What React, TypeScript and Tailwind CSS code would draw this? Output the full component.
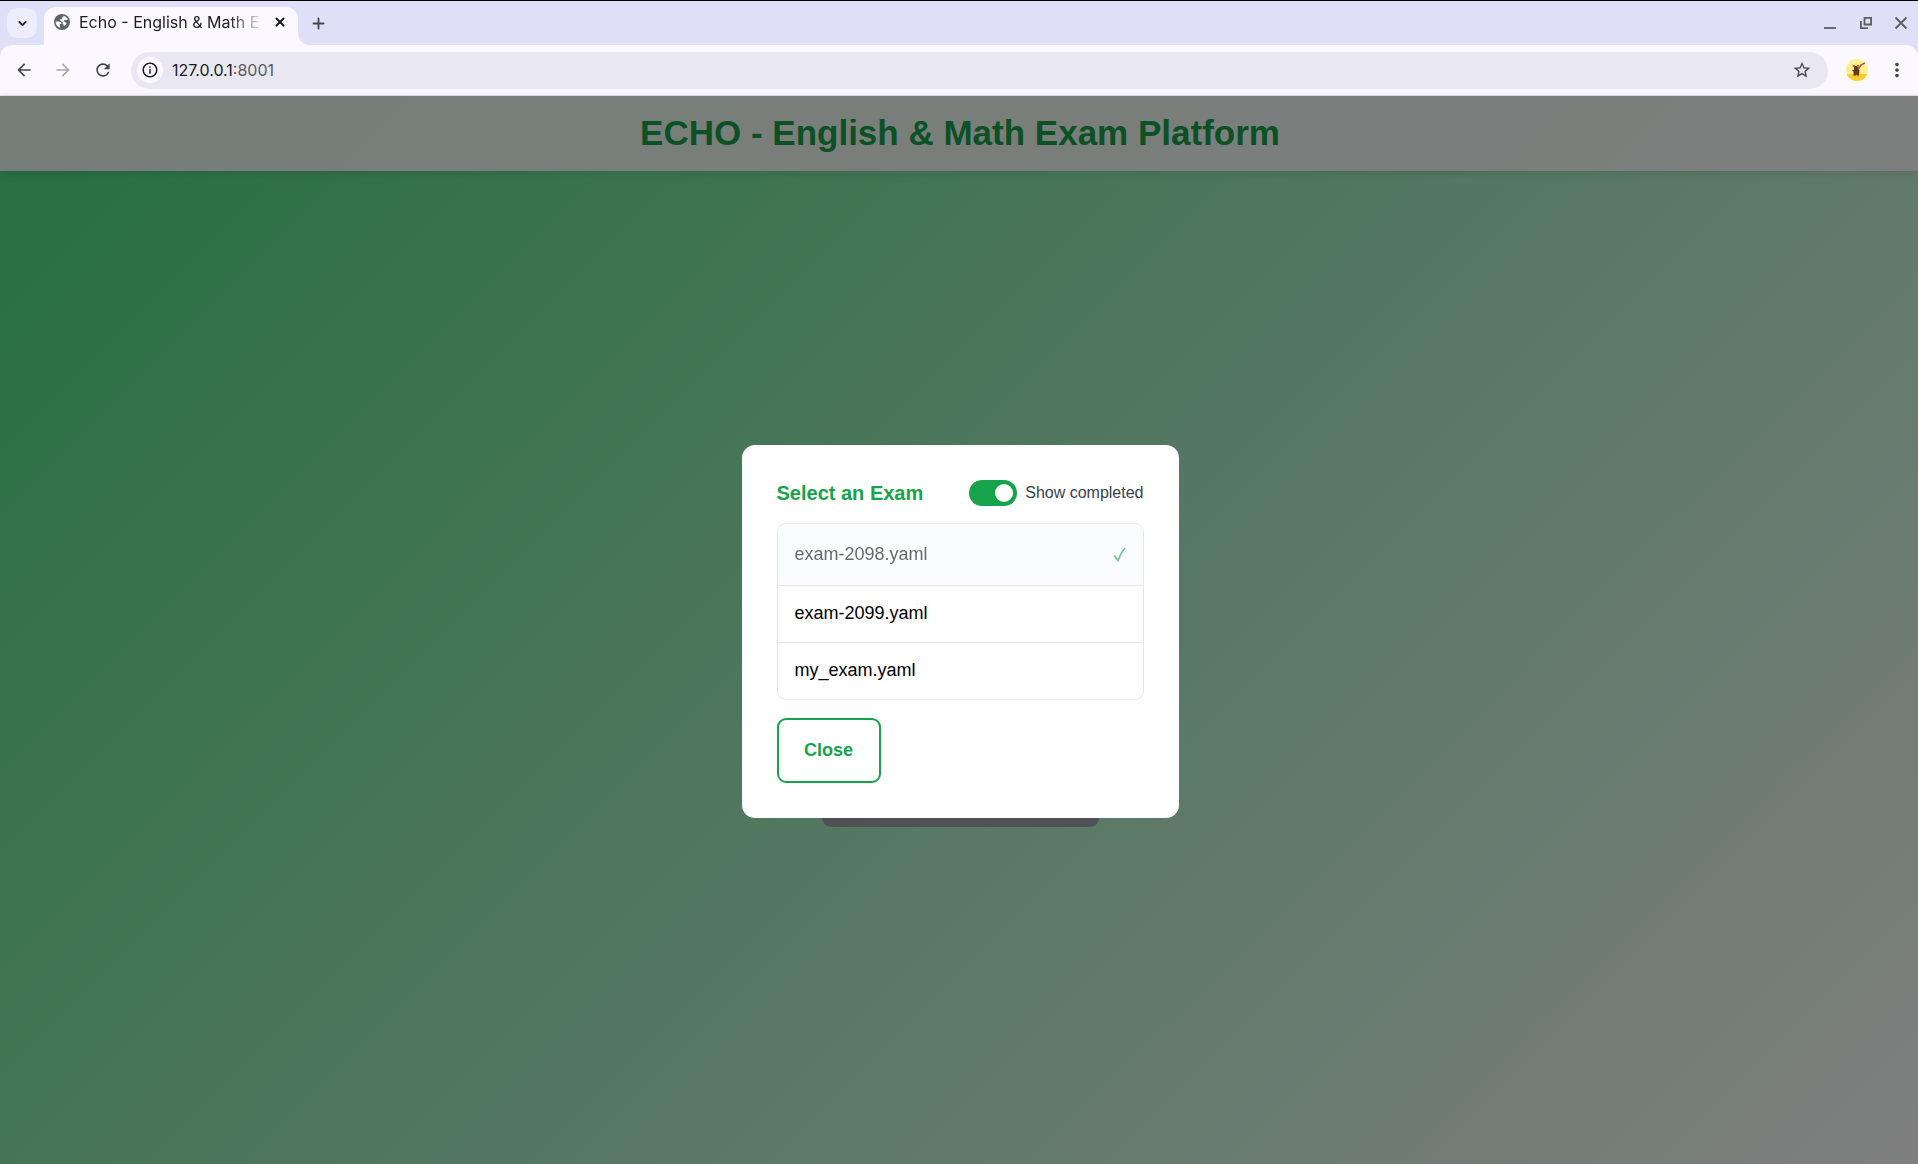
import { Plus, X, ChevronDown } from "lucide-react";
import { MdArrowBack, MdArrowForward, MdRefresh, MdInfoOutline, MdStarBorder, MdMoreVert } from "react-icons/md";

function GlobeIcon() {
  return (
    <svg width="16" height="16" viewBox="0 0 16 16" className="shrink-0" aria-hidden="true">
      <circle cx="8" cy="8" r="8" fill="#5f6368" />
      <path d="M1.500 7.500H4.500C6 7.500 7.500 8.500 7.500 10H5.800V11.500L6.300 13.800C3.500 13 1.500 10.700 1.500 7.500Z" fill="#fbf8ff" />
      <path d="M9.300 1.700C11.500 2.100 13.200 3.500 14 5.400L12.300 6H10.500L9.800 7.300L11.300 8L12.500 9.300L11.800 11L9.800 12L9.500 10.500L8.600 9.600V8.300L6.500 7L6 5.500L7.800 4.800L8 3.500L9.300 3Z" fill="#fbf8ff" />
    </svg>
  );
}

function TabStrip() {
  return (
    <div className="flex h-[45px] items-end border-t border-black bg-[#dfdff7]">
      <div className="flex h-[44px] w-[44px] items-center justify-center">
        <button aria-label="Search tabs" className="flex size-[30px] items-center justify-center rounded-[10px] bg-[#eeedfd] text-[#1b1b22]">
          <ChevronDown size={13} strokeWidth={3.4} />
        </button>
      </div>
      <div className="flex h-[38px] w-[254px] items-center rounded-t-xl bg-[#fbf8ff] pr-3 pb-2 pl-[10px]">
        <GlobeIcon />
        <span className="ml-[9px] w-[186px] shrink-0 bg-linear-to-r from-[#1b1b22] from-80% to-transparent bg-clip-text text-base whitespace-nowrap text-transparent">
          Echo - English &amp; Math E
        </span>
        <button aria-label="Close tab" className="ml-2 text-[#1b1b22]">
          <X size={14} strokeWidth={3.4} />
        </button>
      </div>
      <svg className="size-3 shrink-0" viewBox="0 0 12 12" aria-hidden="true"><path d="M0 0A12 12 0 0 0 12 12H0Z" fill="#fbf8ff" /></svg>
      <button aria-label="New tab" className="flex h-[44px] items-center text-[#45464f]">
        <Plus size={17} strokeWidth={2.6} />
      </button>
      <div className="ml-auto flex h-[44px] items-center gap-[21px] pr-[10px] text-[#5d5d64]">
        <button aria-label="Minimize">
          <svg width="16" height="16" viewBox="0 0 16 16"><path d="M2 13H14" stroke="currentColor" strokeWidth="1.800" /></svg>
        </button>
        <button aria-label="Restore">
          <svg width="14" height="14" viewBox="0 0 14 14" fill="none" stroke="currentColor" strokeWidth="1.800"><path d="M5.500 1.900H12.100V8.500H5.500ZM1.900 5V12.100H9" /></svg>
        </button>
        <button aria-label="Close window">
          <svg width="14" height="14" viewBox="0 0 14 14"><path d="M1.500 1.500L12.500 12.500M12.500 1.500L1.500 12.500" stroke="currentColor" strokeWidth="1.800" /></svg>
        </button>
      </div>
    </div>
  );
}

function Toolbar() {
  return (
    <div className="bg-[#dfdff7]">
      <div className="flex h-[51px] items-center rounded-t-xl border-b border-[#dfe0e8] bg-[#fbf8ff] pr-[10px] pl-3 text-[#45464f]">
        <button aria-label="Back" className="flex size-6 items-center justify-center"><MdArrowBack size={20} /></button>
        <button aria-label="Forward" className="ml-[15px] flex size-6 items-center justify-center text-[#a9a8b0]"><MdArrowForward size={20} /></button>
        <button aria-label="Reload" className="ml-4 flex size-6 items-center justify-center"><MdRefresh size={20} /></button>
        <div className="ml-4 flex h-[37px] flex-1 items-center rounded-full bg-[#e9e7f2] pr-4 pl-[6px]">
          <button aria-label="Site information" className="flex size-[26px] items-center justify-center rounded-full bg-[#fbf8ff] text-[#1b1b22]"><MdInfoOutline size={18} /></button>
          <a href="#" className="ml-[9px] flex-1 text-base text-[#1b1b22]">127.0.0.1<span className="text-[#5a5963]">:8001</span></a>
          <button aria-label="Bookmark this tab"><MdStarBorder size={20} /></button>
        </div>
        <button aria-label="Profile" className="ml-[18px]">
          <svg width="22" height="22" viewBox="0 0 22 22">
            <clipPath id="avatar"><circle cx="11" cy="11" r="11" /></clipPath>
            <g clipPath="url(#avatar)">
              <path d="M0 0H22V22H0Z" fill="#fdf08e" />
              <path d="M0 15H22V22H0Z" fill="#fdcb2e" />
              <path d="M12.500 9.500L15 6L19 3.800" stroke="#9a6034" strokeWidth="1.500" fill="none" />
              <path d="M8 7H12L12.500 10L13.500 11.500L13 16.500H11L10.500 15.500L10 16.500H7.500V12.500L6 11.500L8 10.500Z" fill="#6b3518" />
              <circle cx="7.800" cy="7" r="1.300" fill="#a87348" />
              <circle cx="12" cy="7" r="1.300" fill="#a87348" />
            </g>
          </svg>
        </button>
        <button aria-label="Menu" className="ml-[18px]"><MdMoreVert size={22} /></button>
      </div>
    </div>
  );
}

const exams = [
  { name: "exam-2098.yaml", completed: true },
  { name: "exam-2099.yaml", completed: false },
  { name: "my_exam.yaml", completed: false },
];

function ExamDialog() {
  return (
    <section role="dialog" aria-labelledby="dialog-title" className="w-[437px] rounded-[13px] bg-white p-[35px]">
      <div className="flex items-center justify-between">
        <h2 id="dialog-title" className="text-xl leading-6 font-bold text-[#16a34a]">Select an Exam</h2>
        <label className="flex items-center gap-2 text-base leading-6 text-[#374151]">
          <span className="flex items-center">
            <input type="checkbox" role="switch" defaultChecked className="peer sr-only" />
            <span className="flex h-[26px] w-12 items-center justify-end rounded-full bg-[#16a34a] px-1">
              <span className="size-[18px] rounded-full bg-white" />
            </span>
          </span>
          Show completed
        </label>
      </div>
      <ul className="mt-[17px] overflow-hidden rounded-[9px] border border-[#e5e7eb] text-[18px]">
        {exams.map((exam) => (
          <li key={exam.name} className="border-b border-[#e5e7eb] last:border-b-0">
            <button
              className={
                exam.completed
                  ? "flex h-[61px] w-full items-center justify-between bg-[#f8fafc] px-[17px] text-left opacity-60"
                  : "flex h-14 w-full items-center px-[17px] text-left"
              }
            >
              {exam.name}
              {exam.completed && (
                <svg width="13" height="15" viewBox="0 0 13 15" aria-label="Completed">
                  <path d="M1.200 8.500L5 13.500C6.500 9 8.500 5 12 1" fill="none" stroke="#16a34a" strokeWidth="1.800" />
                </svg>
              )}
            </button>
          </li>
        ))}
      </ul>
      <button className="mt-[18px] flex h-[65px] w-[104px] items-center justify-center rounded-[9px] border-2 border-[#16a34a] text-[18px] font-bold text-[#16a34a]">Close</button>
    </section>
  );
}

export default function App() {
  return (
    <div className="flex min-h-screen flex-col font-[Inter,sans-serif]">
      <TabStrip />
      <Toolbar />
      <div className="relative flex flex-1 flex-col bg-[linear-gradient(135deg,#4ade80,#ffffff)] font-['Liberation_Sans',Arial,sans-serif]">
        <header className="flex h-[75px] items-center justify-center bg-white/90 pl-0.5 shadow-[0_2px_10px_rgba(0,0,0,0.1)]">
          <h1 className="text-[35px] font-bold text-[#16a34a]">ECHO - English &amp; Math Exam Platform</h1>
        </header>
        <main className="flex flex-1 items-center justify-center pl-0.5">
          <div className="mt-[252px] h-[66px] w-[277px] rounded-[9px] bg-[#a0a2af]" />
        </main>
        <div className="absolute inset-0 flex items-center justify-center bg-black/50 pt-0.5 pl-0.5">
          <ExamDialog />
        </div>
      </div>
    </div>
  );
}
